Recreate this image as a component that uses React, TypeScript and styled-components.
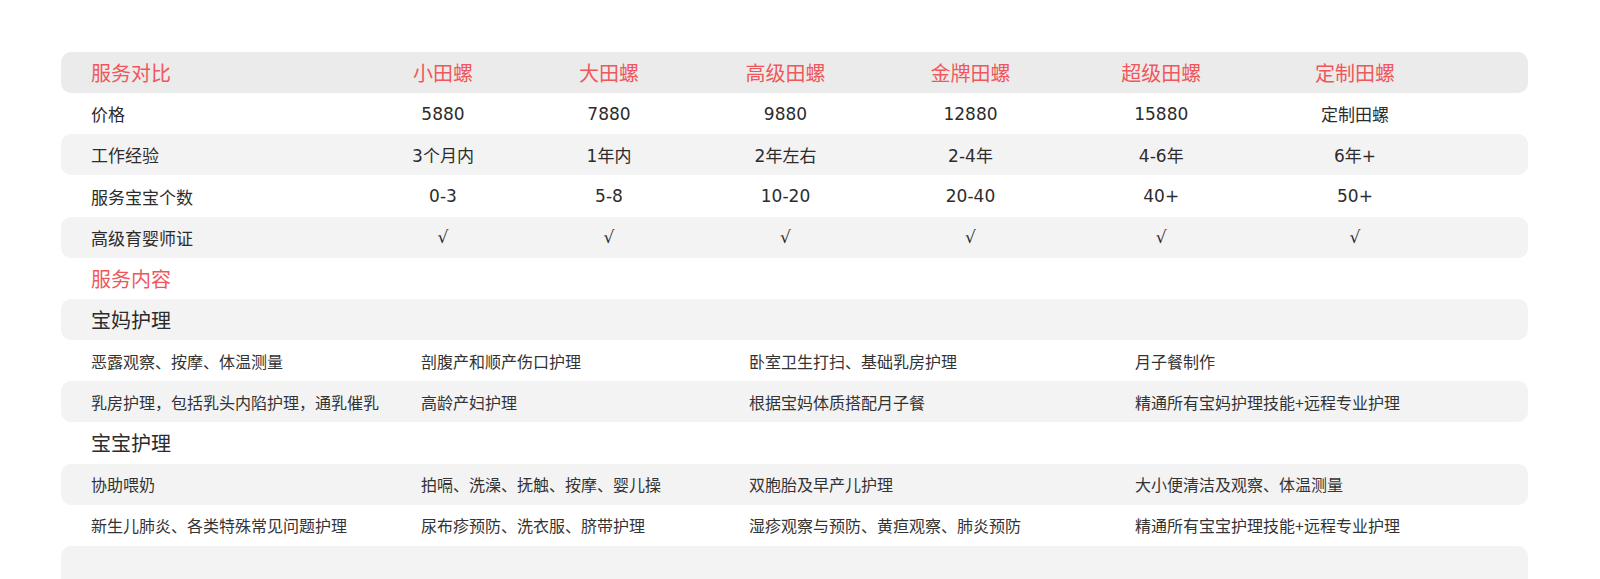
import React from 'react';
import styled, {createGlobalStyle} from "styled-components";

const GlobalStyle = createGlobalStyle`
  body {
    margin: 0;
    background: #ffffff;
    font-family: "Noto Sans CJK SC", "Noto Sans", sans-serif;
    color: #333333;
  }
`

const levels = ["小田螺", "大田螺", "高级田螺", "金牌田螺", "超级田螺", "定制田螺"];

const compareRows = [
    {label: "价格", values: ["5880", "7880", "9880", "12880", "15880", "定制田螺"]},
    {label: "工作经验", values: ["3个月内", "1年内", "2年左右", "2-4年", "4-6年", "6年+"]},
    {label: "服务宝宝个数", values: ["0-3", "5-8", "10-20", "20-40", "40+", "50+"]},
    {label: "高级育婴师证", values: ["√", "√", "√", "√", "√", "√"]},
];

const momCare = [
    ["恶露观察、按摩、体温测量", "剖腹产和顺产伤口护理", "卧室卫生打扫、基础乳房护理", "月子餐制作"],
    ["乳房护理，包括乳头内陷护理，通乳催乳", "高龄产妇护理", "根据宝妈体质搭配月子餐", "精通所有宝妈护理技能+远程专业护理"],
];

const babyCare = [
    ["协助喂奶", "拍嗝、洗澡、抚触、按摩、婴儿操", "双胞胎及早产儿护理", "大小便清洁及观察、体温测量"],
    ["新生儿肺炎、各类特殊常见问题护理", "尿布疹预防、洗衣服、脐带护理", "湿疹观察与预防、黄疸观察、肺炎预防", "精通所有宝宝护理技能+远程专业护理"],
];

// alternating shading starts after the header
const shadeAt = (i: number) => (i % 2 === 1 ? "gray" : "white");

export default function App() {
    let rowIndex = 0;
    const nextShade = () => shadeAt(rowIndex++);

    return (
        <>
            <GlobalStyle/>
            <Page>
                <Table>
                    <CompareRow $shade="head">
                        <HeadCell $align="left">服务对比</HeadCell>
                        {levels.map(l => <HeadCell key={l}>{l}</HeadCell>)}
                    </CompareRow>

                    {compareRows.map(r => (
                        <CompareRow key={r.label} $shade={nextShade()}>
                            <Cell $align="left">{r.label}</Cell>
                            {r.values.map((v, i) => <Cell key={i}>{v}</Cell>)}
                        </CompareRow>
                    ))}

                    <SectionRow $shade={nextShade()}>
                        <SectionTitle>服务内容</SectionTitle>
                    </SectionRow>

                    <SectionRow $shade={nextShade()}>
                        <GroupTitle>宝妈护理</GroupTitle>
                    </SectionRow>
                    {momCare.map((items, i) => (
                        <ServiceRow key={"m" + i} $shade={nextShade()}>
                            {items.map(t => <ServiceCell key={t}>{t}</ServiceCell>)}
                        </ServiceRow>
                    ))}

                    <SectionRow $shade={nextShade()}>
                        <GroupTitle>宝宝护理</GroupTitle>
                    </SectionRow>
                    {babyCare.map((items, i) => (
                        <ServiceRow key={"b" + i} $shade={nextShade()}>
                            {items.map(t => <ServiceCell key={t}>{t}</ServiceCell>)}
                        </ServiceRow>
                    ))}

                    <SectionRow $shade={nextShade()}/>
                </Table>
            </Page>
        </>
    );
}

type Shade = "head" | "gray" | "white";

const shadeColor = (s: Shade) =>
    s === "head" ? "#ecebeb" : s === "gray" ? "#f4f3f4" : "#ffffff";

const Page = styled.div`
  width: 1600px;
  height: 579px;
  overflow: hidden;
  padding: 52px 72px 0 61px;
  box-sizing: border-box;
`

const Table = styled.div`
  display: flex;
  flex-direction: column;
`

const BaseRow = styled.div<{ $shade: Shade }>`
  height: 41.17px;
  flex-shrink: 0;
  box-sizing: border-box;
  background: ${p => shadeColor(p.$shade)};
  border-radius: 10px;
  align-items: center;
`

const CompareRow = styled(BaseRow)`
  display: grid;
  grid-template-columns: 301.5px 161px 171px 182px 188px 193.5px 194px 1fr;
`

const SectionRow = styled(BaseRow)`
  display: flex;
  padding-left: 30px;
`

const ServiceRow = styled(BaseRow)`
  display: grid;
  grid-template-columns: 330px 328px 386px 1fr;
`

const HeadCell = styled.div<{ $align?: "left" | "center" }>`
  font-size: 20px;
  color: #f0575c;
  text-align: ${p => p.$align ?? "center"};
  padding-left: ${p => (p.$align === "left" ? "30px" : "0")};
`

const Cell = styled.div<{ $align?: "left" | "center" }>`
  font-family: "DejaVu Sans", "Noto Sans CJK SC", sans-serif;
  font-size: 17px;
  color: #2c2c2c;
  text-align: ${p => p.$align ?? "center"};
  padding-left: ${p => (p.$align === "left" ? "30px" : "0")};
`

const SectionTitle = styled.div`
  font-size: 20px;
  color: #f0575c;
`

const GroupTitle = styled.div`
  font-size: 20px;
  color: #2c2c2c;
`

const ServiceCell = styled.div`
  font-size: 16px;
  color: #333333;
  padding-left: 30px;
  white-space: nowrap;
`
